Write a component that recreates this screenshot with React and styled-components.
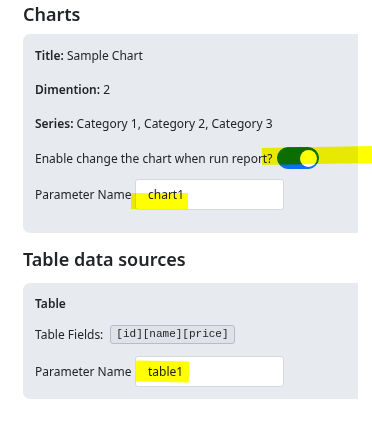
import React from 'react'
import styled, { createGlobalStyle } from 'styled-components'

const GlobalStyle = createGlobalStyle`
  body {
    margin: 0;
    background: #fff;
    color: #212529;
    font-family: "Noto Sans", "Open Sans", sans-serif;
    font-size: 12px;
  }
`

const Page = styled.div`
  width: 335px;
  padding: 3px 0 0 23px;
`

const Heading = styled.h2`
  margin: ${(p) => p.$top || 0}px 0 ${(p) => p.$bottom || 0}px;
  font-size: 18px;
  line-height: 22px;
  font-weight: 600;
  color: #212529;
`

const Card = styled.div`
  background: #e7eaef;
  border-radius: 7px 0 0 7px;
  padding: ${(p) => p.$padTop || 12}px 12px ${(p) => p.$padBottom || 12}px;
`

const Line = styled.p`
  margin: 0 0 ${(p) => (p.$gap === undefined ? 16 : p.$gap)}px;
  line-height: 18px;
`

const Strong = styled.span`
  font-weight: 600;
`

const Row = styled.div`
  display: flex;
  align-items: center;
  margin-bottom: ${(p) => p.$gap || 0}px;
`

const Label = styled.span`
  width: ${(p) => (p.$width ? `${p.$width}px` : 'auto')};
  flex-shrink: 0;
`

const Marked = styled.span`
  position: relative;
  display: inline-flex;
`

const Marker = styled.span`
  position: absolute;
  left: ${(p) => p.$left}px;
  top: ${(p) => p.$top}px;
  width: ${(p) => p.$width}px;
  height: ${(p) => p.$height}px;
  background: #ffff00;
  mix-blend-mode: multiply;
  transform: rotate(${(p) => p.$tilt || 0}deg);
  pointer-events: none;
`

const Switch = styled.span`
  position: relative;
  display: inline-block;
  width: 42px;
  height: 22px;
  margin-left: 5px;
  box-sizing: border-box;
  border-radius: 11px;
  background: #0d6efd;
  border: 1px solid #0d6efd;
`

const Knob = styled.span`
  position: absolute;
  right: 1px;
  top: 1.5px;
  width: 17px;
  height: 17px;
  border-radius: 50%;
  background: #fff;
`

const TextInput = styled.input`
  box-sizing: border-box;
  width: 149px;
  height: 31px;
  padding: 0 12px;
  border: 1px solid #d5d9de;
  border-radius: 3px;
  background: #fff;
  font-family: inherit;
  font-size: 12px;
  color: #212529;
  outline: none;
`

const Code = styled.code`
  display: inline-block;
  margin-left: 7px;
  padding: 0 5px;
  height: 19px;
  line-height: 17px;
  box-sizing: border-box;
  border: 1px solid #b9bdc3;
  border-radius: 3px;
  background: #dfe2e7;
  font-family: "Liberation Mono", "DejaVu Sans Mono", monospace;
  font-size: 11px;
  color: #212529;
`

function ParameterRow({ value, marker }) {
  return (
    <Row>
      <Label $width={100}>Parameter Name</Label>
      <Marked>
        <TextInput defaultValue={value} readOnly />
        <Marker {...marker} />
      </Marked>
    </Row>
  )
}

export default function App() {
  return (
    <Page>
      <GlobalStyle />
      <Heading $bottom={9}>Charts</Heading>
      <Card $padTop={13} $padBottom={23}>
        <Line><Strong>Title:</Strong> Sample Chart</Line>
        <Line><Strong>Dimention:</Strong> 2</Line>
        <Line $gap={14}><Strong>Series:</Strong> Category 1, Category 2, Category 3</Line>
        <Row $gap={10}>
          <Label>Enable change the chart when run report?</Label>
          <Marked>
            <Switch>
              <Knob />
            </Switch>
            <Marker $left={-10} $top={0} $width={110} $height={17} $tilt={-1} />
          </Marked>
        </Row>
        <ParameterRow
          value="chart1"
          marker={{ $left: -4, $top: 14, $width: 57, $height: 16 }}
        />
      </Card>

      <Heading $top={15} $bottom={13}>Table data sources</Heading>
      <Card>
        <Line $gap={12}><Strong>Table</Strong></Line>
        <Row $gap={12}>
          <Label>Table Fields:</Label>
          <Code>[id][name][price]</Code>
        </Row>
        <ParameterRow
          value="table1"
          marker={{ $left: 1, $top: 5, $width: 53, $height: 21, $tilt: 1 }}
        />
      </Card>
    </Page>
  )
}
